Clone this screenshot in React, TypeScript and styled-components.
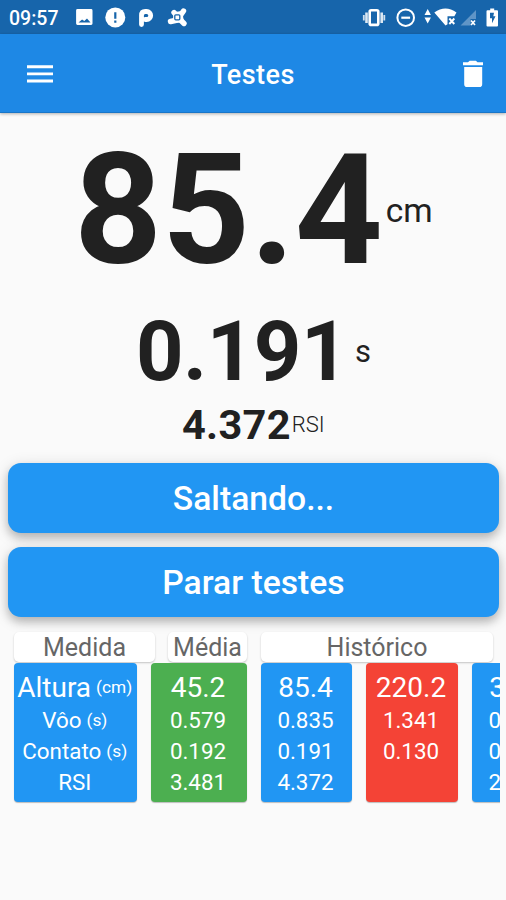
import React from "react";
import styled, { createGlobalStyle } from "styled-components";

const GlobalStyle = createGlobalStyle`
  * { box-sizing: border-box; }
  html, body { margin: 0; background: #fafafa; }
  body { font-family: Roboto, "Liberation Sans", sans-serif; }
`;

const Screen = styled.div`
  width: 506px;
  height: 900px;
  overflow: hidden;
  display: flex;
  flex-direction: column;
  background: #fafafa;
  color: #212121;
`;

const StatusBar = styled.header`
  height: 34px;
  flex: none;
  display: flex;
  align-items: center;
  justify-content: space-between;
  background: #1765ab;
  color: #fff;
`;

const Clock = styled.span`
  width: 70px;
  padding: 3px 0 0 9px;
  font-size: 19.5px;
  font-weight: 500;
  line-height: 34px;
  white-space: nowrap;
`;

const StatusGroup = styled.div`
  display: flex;
  align-items: center;
  height: 34px;
`;

const AppBar = styled.nav`
  height: 79px;
  flex: none;
  display: flex;
  align-items: center;
  justify-content: space-between;
  padding: 3px 16px 0 23px;
  background: #1e88e5;
  border-bottom: 1px solid #1976c8;
  box-shadow: 0 1px 3px rgba(0, 0, 0, 0.3);
  color: #fff;
`;

const IconButton = styled.button`
  display: flex;
  padding: 0;
  border: 0;
  background: none;
  color: inherit;
`;

const Title = styled.h1`
  margin: 0 7px 0 0;
  font-size: 27px;
  font-weight: 500;
  letter-spacing: 0.45px;
`;

const Readings = styled.main`
  height: 350px;
  flex: none;
  display: flex;
  flex-direction: column;
`;

const Reading = styled.div<{ $h: number; $left: number; $top?: number }>`
  height: ${(p) => p.$h}px;
  margin-top: ${(p) => p.$top ?? 0}px;
  padding-left: ${(p) => p.$left}px;
  display: flex;
  align-items: center;
  white-space: nowrap;
`;

const Value = styled.strong<{ $size: number; $track?: number }>`
  font-size: ${(p) => p.$size}px;
  font-weight: 700;
  line-height: 1;
  letter-spacing: ${(p) => p.$track ?? 0}px;
`;

const Unit = styled.span<{ $size: number; $gap?: number; $weight?: number }>`
  margin-left: ${(p) => p.$gap ?? 0}px;
  font-size: ${(p) => p.$size}px;
  font-weight: ${(p) => p.$weight ?? 400};
  line-height: 1;
`;

const Actions = styled.div`
  flex: none;
  display: flex;
  flex-direction: column;
  gap: 14px;
  padding: 0 7px 0 8px;
`;

const ActionButton = styled.button`
  height: 70px;
  padding: 1px 0 0;
  border: 0;
  border-radius: 13px;
  background: #2196f3;
  color: #fff;
  font: 500 33.7px/69px Roboto, sans-serif;
  box-shadow: 0 5px 8px rgba(0, 0, 0, 0.2), 0 3px 16px rgba(0, 0, 0, 0.14);
`;

const Table = styled.section`
  width: 500px;
  overflow: hidden;
  padding: 15px 0 6px 14px;
  margin-bottom: auto;
`;

const Labels = styled.div`
  display: flex;
  height: 31px;
`;

const Label = styled.div<{ $w: number; $gap?: number }>`
  width: ${(p) => p.$w}px;
  height: 30px;
  margin-right: ${(p) => p.$gap ?? 0}px;
  border-radius: 5px;
  background: #fff;
  box-shadow: 0 1px 2px rgba(0, 0, 0, 0.22);
  color: #666;
  font-size: 25px;
  line-height: 31px;
  text-align: center;
`;

const Columns = styled.div`
  display: flex;
  gap: 14px;
`;

const Column = styled.div<{ $w: number; $color: string }>`
  width: ${(p) => p.$w}px;
  height: 139px;
  flex: none;
  padding: 7px 1.5px 0 0;
  border-radius: 4px;
  background: ${(p) => p.$color};
  box-shadow: 0 1px 1px rgba(0, 0, 0, 0.25);
  color: #fff;
  text-align: center;
  white-space: nowrap;
`;

const Cell = styled.div<{ $lead?: boolean }>`
  height: ${(p) => (p.$lead ? 34 : 31)}px;
  display: flex;
  align-items: center;
  justify-content: center;
  gap: 5px;
  font-size: ${(p) => (p.$lead ? 28 : 22.4)}px;
`;

const Measure = styled.small`
  font-size: 17.3px;
`;

const StatusIcon = styled.svg`
  display: block;
`;

const BLUE = "#2196f3";
const measures: [string, string?][] = [["Altura", "(cm)"], ["Vôo", "(s)"], ["Contato", "(s)"], ["RSI"]];
const results = [
  { width: 95.5, color: "#4caf50", values: ["45.2", "0.579", "0.192", "3.481"] },
  { width: 91.5, color: BLUE, values: ["85.4", "0.835", "0.191", "4.372"] },
  { width: 91.5, color: "#f44336", values: ["220.2", "1.341", "0.130"] },
  { width: 91.5, color: BLUE, values: ["35.1", "0.535", "0.192", "2.786"] },
];

function NotificationIcons() {
  return (
    <StatusIcon width="130" height="34" viewBox="70 0 130 34">
      <path
        fill="#fff"
        fillRule="evenodd"
        d="M77.500 9h13.600q1.400 0 1.400 1.400v13.200q0 1.400-1.400 1.400H77.500q-1.400 0-1.400-1.400V10.400Q76.100 9 77.500 9zM78.500 22.500h12l-3.500-4-2.700 2.600-2.200-1.600z"
      />
      <circle cx="115.300" cy="17.400" r="10" fill="#fff" />
      <path d="M115.300 12.300v6.400M115.300 20.600v2.200" stroke="#1765ab" strokeWidth="2.200" />
      <path
        d="M141.500 24.500V15.500Q141.500 11.500 145.200 11.500h1.500a4 4 0 0 1 0 8h-1.500"
        fill="none"
        stroke="#fff"
        strokeWidth="4.800"
        strokeLinecap="round"
      />
      <g stroke="#fff" strokeWidth="5.400" strokeLinecap="round" fill="none">
        <path d="M174 12.500l3.500 4M183.500 11l-3.500 5M184 23.500l-4-4M170.500 21.500l7-1.500" />
      </g>
      <path d="M172.500 11q5 2 11-1-1.500 7 1.500 14-7-2.500-14-1.500 3.500-4 1.500-11.500z" fill="#fff" />
      <rect x="174.800" y="14.800" width="5" height="5" rx="1" fill="#fff" stroke="#1765ab" strokeWidth="1.300" />
    </StatusIcon>
  );
}

function SystemIcons() {
  return (
    <StatusIcon width="146" height="34" viewBox="360 0 146 34">
      <g fill="none" stroke="#fff">
        <rect x="369.700" y="10.300" width="8.600" height="14.600" rx="1.500" strokeWidth="2.600" />
        <path d="M366.500 12.500v10.500M381.700 12.500v10.500" strokeWidth="2.600" opacity=".85" />
        <path d="M363.800 15v5.500M384.300 15v5.500" strokeWidth="1.800" opacity=".8" />
        <circle cx="405.700" cy="17.700" r="8.300" strokeWidth="2" />
        <path d="M401.300 17.700h8.800" strokeWidth="2.200" />
      </g>
      <path d="M427.700 9l3.200 6h-6.400zM427.700 23.500l3.200-6h-6.400z" fill="#fff" />
      <path d="M434.300 12.500Q445.500 4.500 456.500 12.500L454.300 16.300h-6.800v8l-2 1.200z" fill="#fff" />
      <path d="M449.300 18.500l5 5.500M454.300 18.500l-5 5.500" stroke="#fff" strokeWidth="1.900" />
      <path d="M460.500 25.500L476 10v9h-5.500v6.500z" fill="#5f95c7" />
      <path d="M471 20.500l4 4.500M475 20.500l-4 4.500" stroke="#fff" strokeWidth="1.700" />
      <path d="M487.500 10.200h2.700V8.500h4v1.700h2.800q1 0 1 1v14.300q0 1-1 1h-9.500q-1 0-1-1V11.200q0-1 1-1z" fill="#fff" />
      <path d="M494 12.700h-4v5.500h2v5l3.500-7h-2.200z" fill="#1765ab" />
    </StatusIcon>
  );
}

export default function App() {
  return (
    <Screen>
      <GlobalStyle />
      <StatusBar>
        <StatusGroup>
          <Clock>09:57</Clock>
          <NotificationIcons />
        </StatusGroup>
        <SystemIcons />
      </StatusBar>
      <AppBar>
        <IconButton aria-label="Menu">
          <svg width="34" height="34" viewBox="0 0 34 34">
            <path d="M4 8.700h26M4 15.900h26M4 23h26" stroke="#fff" strokeWidth="2.900" />
          </svg>
        </IconButton>
        <Title>Testes</Title>
        <IconButton aria-label="Apagar">
          <svg width="34" height="34" viewBox="0 0 34 34">
            <path d="M7 4.200h5L13.700 2.700h6.200l1.600 1.500h5.500v3H7zM8.200 9h18v17.200q0 2.800-2.800 2.800H11q-2.800 0-2.800-2.800z" fill="#fff" />
          </svg>
        </IconButton>
      </AppBar>
      <Readings>
        <Reading $h={180} $left={74} $top={8}>
          <Value $size={153.5}>85.4</Value>
          <Unit $size={33.5} $gap={3}>cm</Unit>
        </Reading>
        <Reading $h={98} $left={136} $top={1}>
          <Value $size={83} $track={-0.5}>0.191</Value>
          <Unit $size={31} $gap={7}>s</Unit>
        </Reading>
        <Reading $h={49} $left={182}>
          <Value $size={41.5} $track={0.3}>4.372</Value>
          <Unit $size={22} $gap={1} $weight={300}>RSI</Unit>
        </Reading>
      </Readings>
      <Actions>
        <ActionButton>Saltando...</ActionButton>
        <ActionButton>Parar testes</ActionButton>
      </Actions>
      <Table>
        <Labels>
          <Label $w={141} $gap={13}>Medida</Label>
          <Label $w={79} $gap={14}>Média</Label>
          <Label $w={232}>Histórico</Label>
        </Labels>
        <Columns>
          <Column $w={123} $color={BLUE}>
            {measures.map(([name, unit], i) => (
              <Cell key={name} $lead={i === 0}>
                <span>{name}</span>
                {unit && <Measure>{unit}</Measure>}
              </Cell>
            ))}
          </Column>
          {results.map((r) => (
            <Column key={r.values[0]} $w={r.width} $color={r.color}>
              {r.values.map((v, i) => (
                <Cell key={v} $lead={i === 0}>{v}</Cell>
              ))}
            </Column>
          ))}
        </Columns>
      </Table>
    </Screen>
  );
}
